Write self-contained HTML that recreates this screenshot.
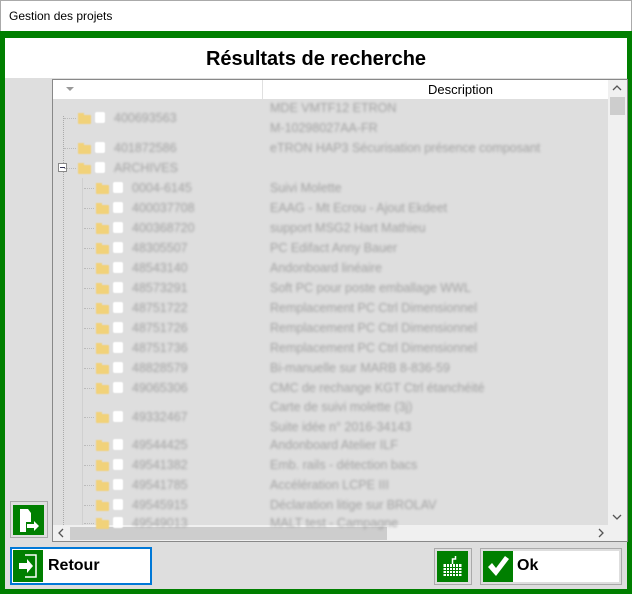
<!DOCTYPE html>
<html><head><meta charset="utf-8"><style>
*{margin:0;padding:0;box-sizing:border-box}
body{width:632px;height:594px;overflow:hidden;background:#fff;font-family:"Liberation Sans",sans-serif;position:relative}
.a{position:absolute}
.t{color:#a2a2a2;font-size:12.5px;filter:blur(1.4px);white-space:nowrap;line-height:14px}
.fold{position:absolute;width:13px;height:9px;background:#f1d27a;border-radius:1px;filter:blur(.5px)}
.fold:before{content:"";position:absolute;left:0;top:-2px;width:6px;height:3px;background:#f1d27a}
.cb{position:absolute;width:10px;height:11px;background:#fff;border-radius:2px;filter:blur(.5px)}
</style></head><body>
<div class="a" style="left:0;top:0;width:632px;height:31px;background:#fff;border:1px solid #aaa;border-bottom:none"></div>
<div class="a" style="left:9px;top:9px;font-size:12px;color:#000">Gestion des projets</div>
<div class="a" style="left:0;top:31px;width:632px;height:563px;background:#dedede;border:5px solid #007f00;border-top-width:7px"></div>
<div class="a" style="left:5px;top:38px;width:622px;height:40px;background:#fff"></div>
<div class="a" style="left:0;top:48px;width:632px;text-align:center;font-size:20px;font-weight:bold;color:#000">Résultats de recherche</div>
<div class="a" style="left:52px;top:79px;width:576px;height:463px;border:1px solid #888;background:#dedede"></div>
<div class="a" style="left:53px;top:80px;width:555px;height:19px;background:#fff"></div>
<div class="a" style="left:262px;top:80px;width:1px;height:19px;background:#e0e0e0"></div>
<div class="a" style="left:66px;top:87px;width:0;height:0;border-left:4px solid transparent;border-right:4px solid transparent;border-top:4px solid #999"></div>
<div class="a" style="left:428px;top:82px;font-size:13px;color:#000">Description</div>
<div class="a" style="left:608px;top:80px;width:19px;height:445px;background:#f0f0f0"></div>
<div class="a" style="left:610px;top:97px;width:15px;height:18px;background:#cdcdcd"></div>
<svg class="a" style="left:612px;top:84px" width="10" height="8"><path d="M1 6l4-4 4 4" fill="none" stroke="#555" stroke-width="1.3"/></svg>
<svg class="a" style="left:612px;top:513px" width="10" height="8"><path d="M1 2l4 4 4-4" fill="none" stroke="#555" stroke-width="1.3"/></svg>
<div class="a" style="left:53px;top:525px;width:574px;height:16px;background:#f0f0f0"></div>
<div class="a" style="left:70px;top:527px;width:317px;height:13px;background:#cdcdcd"></div>
<svg class="a" style="left:57px;top:528px" width="8" height="10"><path d="M6 1L2 5l4 4" fill="none" stroke="#555" stroke-width="1.3"/></svg>
<svg class="a" style="left:597px;top:528px" width="8" height="10"><path d="M2 1l4 4-4 4" fill="none" stroke="#555" stroke-width="1.3"/></svg>
<div class="a" style="left:63px;top:116px;width:1px;height:409px;border-left:1px dotted #aaa"></div>
<div class="a" style="left:82px;top:178px;width:1px;height:347px;border-left:1px solid #d0d0d0"></div>
<div class="a" style="left:58px;top:163px;width:9px;height:9px;border:1px solid #888;background:#fff"></div>
<div class="a" style="left:60px;top:167px;width:5px;height:1px;background:#335"></div>
<div id="rows"></div>
<script>
var R=[[118,0,"400693563",["MDE VMTF12 ETRON","M-10298027AA-FR"]],[148,0,"401872586",["eTRON HAP3 Sécurisation présence composant"]],[168,0,"ARCHIVES",[""]],[188,1,"0004-6145",["Suivi Molette"]],[208,1,"400037708",["EAAG - Mt Ecrou - Ajout Ekdeet"]],[228,1,"400368720",["support MSG2 Hart Mathieu"]],[248,1,"48305507",["PC Edifact Anny Bauer"]],[268,1,"48543140",["Andonboard linéaire"]],[288,1,"48573291",["Soft PC pour poste emballage WWL"]],[308,1,"48751722",["Remplacement PC Ctrl Dimensionnel"]],[328,1,"48751726",["Remplacement PC Ctrl Dimensionnel"]],[348,1,"48751736",["Remplacement PC Ctrl Dimensionnel"]],[368,1,"48828579",["Bi-manuelle sur MARB 8-836-59"]],[388,1,"49065306",["CMC de rechange KGT Ctrl étanchéité"]],[417,1,"49332467",["Carte de suivi molette (3j)","Suite idée n° 2016-34143"]],[445,1,"49544425",["Andonboard Atelier ILF"]],[465,1,"49541382",["Emb. rails - détection bacs"]],[485,1,"49541785",["Accélération LCPE III"]],[505,1,"49545915",["Déclaration litige sur BROLAV"]],[523,1,"49549013",["MALT test - Campagne"]]];
var h="";R.forEach(function(r){var y=r[0],l=r[1],x=l?96:78;
h+='<div class="a" style="left:'+(l?84:64)+'px;top:'+y+'px;width:'+(l?10:12)+'px;border-top:1px dotted #bbb"></div>';
h+='<div class="fold" style="left:'+x+'px;top:'+(y-3)+'px"></div><div class="cb" style="left:'+(x+17)+'px;top:'+(y-6)+'px"></div>';
h+='<div class="a t" style="left:'+(x+36)+'px;top:'+(y-7)+'px">'+r[2]+'</div>';
var d=r[3];if(d.length==1)h+='<div class="a t" style="left:270px;top:'+(y-7)+'px">'+d[0]+'</div>';
else{h+='<div class="a t" style="left:270px;top:'+(y-17)+'px">'+d[0]+'</div><div class="a t" style="left:270px;top:'+(y+3)+'px">'+d[1]+'</div>';}});
document.getElementById("rows").innerHTML=h;
</script>
<div class="a" style="left:53px;top:541px;width:575px;height:1px;background:#888"></div>
<div class="a" style="left:10px;top:501px;width:38px;height:37px;border:1px solid #aaa;background:#dedede"></div>
<div class="a" style="left:13px;top:505px;width:31px;height:30px;background:#007f00"></div>
<svg class="a" style="left:13px;top:505px" width="31" height="30" viewBox="0 0 31 30"><path d="M7 4h8l3 4v9h-5v10H7z" fill="#fff"/><path d="M14 19h7v-3l5 5-5 5v-3h-7z" fill="#fff"/></svg>
<div class="a" style="left:10px;top:547px;width:142px;height:38px;border:2px solid #0078d7;background:#fff"></div>
<div class="a" style="left:13px;top:550px;width:30px;height:32px;background:#007f00"></div>
<svg class="a" style="left:13px;top:550px" width="30" height="32" viewBox="0 0 30 32"><path d="M12 5h11v22H12" fill="none" stroke="#fff" stroke-width="1.5"/><path d="M6 13h8v-4l6 7-6 7v-4H6z" fill="#fff"/></svg>
<div class="a" style="left:48px;top:557px;font-size:16px;font-weight:bold;color:#000">Retour</div>
<div class="a" style="left:434px;top:548px;width:38px;height:37px;border:1px solid #aaa;background:#dedede"></div>
<div class="a" style="left:437px;top:551px;width:31px;height:31px;background:#007f00"></div>
<svg class="a" style="left:437px;top:551px" width="31" height="31" viewBox="0 0 30 31"><path d="M15 13V8h3V5" fill="none" stroke="#fff" stroke-width="1.5"/><rect x="6" y="13" width="18" height="12" fill="#fff"/><path d="M6 16.5h18M6 19.5h18M6 22.5h18M9 13v12M12 13v12M15 13v12M18 13v12M21 13v12" stroke="#007f00" stroke-width="1"/></svg>
<div class="a" style="left:480px;top:548px;width:142px;height:37px;border:1px solid #aaa;background:#dedede"></div>
<div class="a" style="left:483px;top:551px;width:136px;height:31px;background:#fff"></div>
<div class="a" style="left:483px;top:551px;width:30px;height:31px;background:#007f00"></div>
<svg class="a" style="left:483px;top:551px" width="30" height="31" viewBox="0 0 28 31"><path d="M4 16l4-4 4 5 9-12 4 3-13 17z" fill="#fff"/></svg>
<div class="a" style="left:517px;top:557px;font-size:16px;font-weight:bold;color:#000">Ok</div>
</body></html>
